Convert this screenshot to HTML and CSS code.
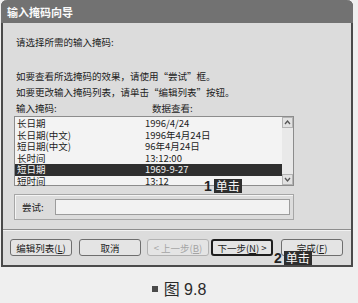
FILE: index.html
```html
<!DOCTYPE html>
<html>
<head>
    <meta charset="UTF-8">
    <title>输入掩码向导</title>
    <link rel="stylesheet" href="styles.css">
</head>
<body>
    <div class="page">
        <div class="dialog">
            <div class="title-bar">输入掩码向导</div>
            <div class="dialog-body">
                <div class="prompt">请选择所需的输入掩码:</div>
                <div class="hint hint-first">如要查看所选掩码的效果，请使用“尝试”框。</div>
                <div class="hint">如要更改输入掩码列表，请单击“编辑列表”按钮。</div>
                <div class="list-header">
                    <span class="header-mask">输入掩码:</span>
                    <span class="header-data">数据查看:</span>
                </div>
                <div class="mask-list">
                    <div class="mask-rows">
                        <div class="mask-row"><span class="col-mask">长日期</span><span class="col-data">1996/4/24</span></div>
                        <div class="mask-row"><span class="col-mask">长日期(中文)</span><span class="col-data">1996年4月24日</span></div>
                        <div class="mask-row"><span class="col-mask">短日期(中文)</span><span class="col-data">96年4月24日</span></div>
                        <div class="mask-row"><span class="col-mask">长时间</span><span class="col-data">13:12:00</span></div>
                        <div class="mask-row selected"><span class="col-mask">短日期</span><span class="col-data">1969-9-27</span></div>
                        <div class="mask-row"><span class="col-mask">短时间</span><span class="col-data">13:12</span></div>
                    </div>
                    <div class="scrollbar">
                        <div class="scroll-button">
                            <svg width="9" height="9" viewBox="0 0 9 9"><polyline points="2,6 4.5,3 7,6" fill="none" stroke="#555" stroke-width="1.3"/></svg>
                        </div>
                        <div class="scroll-track"></div>
                        <div class="scroll-button">
                            <svg width="9" height="9" viewBox="0 0 9 9"><polyline points="2,3 4.5,6 7,3" fill="none" stroke="#555" stroke-width="1.3"/></svg>
                        </div>
                    </div>
                    <div class="callout callout-list"><span class="callout-num">1</span><span class="callout-text">单击</span></div>
                </div>
                <div class="try-group">
                    <span class="try-label">尝试:</span>
                    <div class="try-input"></div>
                </div>
            </div>
            <div class="separator"></div>
            <div class="button-row">
                <button class="button">编辑列表(<u>L</u>)</button>
                <button class="button">取消</button>
                <button class="button back-button">&lt; 上一步(<u>B</u>)</button>
                <button class="button next-button">下一步(<u>N</u>) &gt;</button>
                <button class="button finish-button">完成(<u>F</u>)</button>
                <div class="callout callout-next"><span class="callout-num">2</span><span class="callout-text">单击</span></div>
            </div>
        </div>
        <div class="caption"><span class="caption-mark"></span>图 9.8</div>
    </div>
</body>
</html>
```

FILE: styles.css
```css
body {
    margin: 0;
    background-color: #efefef;
    font-family: "Noto Sans CJK SC", "Liberation Sans", sans-serif;
    color: #1c1c1c;
}

.page {
    width: 358px;
    height: 303px;
    overflow: hidden;
}

.dialog {
    margin-left: 1px;
    width: 352px;
    height: 267px;
    box-sizing: border-box;
    background-color: #dcdcdc;
    border: 2px solid #4a4a4a;
    border-top: none;
    border-radius: 6px 6px 0 0;
    display: flex;
    flex-direction: column;
}

.title-bar {
    height: 23px;
    margin: 0 -2px;
    padding-left: 6px;
    background-color: #727272;
    border-radius: 6px 6px 0 0;
    color: #fafafa;
    font-size: 11px;
    font-weight: bold;
    line-height: 24px;
}

.dialog-body {
    padding: 12px 0 0 11px;
    display: flex;
    flex-direction: column;
    font-size: 9.5px;
    line-height: 14px;
}

.prompt,
.hint {
    padding-left: 2px;
}

.hint {
    margin-top: 2px;
}

.hint-first {
    margin-top: 20px;
}

.list-header {
    margin-top: 2px;
    padding-left: 2px;
    display: flex;
}

.header-mask {
    width: 136px;
}

.mask-list {
    position: relative;
    margin-top: 1px;
    width: 280px;
    height: 70px;
    box-sizing: border-box;
    border: 1px solid #8c8c8c;
    background-color: #f3f3f3;
    display: flex;
}

.mask-rows {
    flex: 1;
    padding-top: 1px;
    font-size: 9.5px;
}

.mask-row {
    height: 11.5px;
    line-height: 11.5px;
    display: flex;
    white-space: nowrap;
}

.mask-row.selected {
    background-color: #2f2f2f;
    color: #f4f4f4;
}

.col-mask {
    width: 128px;
    padding-left: 2px;
}

.scrollbar {
    width: 11px;
    display: flex;
    flex-direction: column;
    background-color: #e9e9e9;
}

.scroll-button {
    height: 11px;
    box-sizing: border-box;
    border: 1px solid #b4b4b4;
    background-color: #e2e2e2;
    display: flex;
    align-items: center;
    justify-content: center;
}

.scroll-track {
    flex: 1;
}

.try-group {
    margin-top: 8px;
    width: 280px;
    height: 26px;
    box-sizing: border-box;
    border: 1px solid #a6a6a6;
    box-shadow: inset 1px 1px 0 #f4f4f4;
    padding: 0 3px 0 7px;
    display: flex;
    align-items: center;
}

.try-label {
    width: 33px;
}

.try-input {
    flex: 1;
    height: 16px;
    box-sizing: border-box;
    border: 1px solid #9c9c9c;
    background-color: #f2f2f2;
}

.separator {
    margin-top: 9px;
    height: 1px;
    background-color: #8e8e8e;
    border-bottom: 1px solid #f2f2f2;
}

.button-row {
    position: relative;
    margin-top: 8px;
    padding-left: 7px;
    display: flex;
    gap: 7px;
}

.button {
    width: 62px;
    height: 17px;
    padding: 0;
    box-sizing: border-box;
    border: 1px solid #6e6e6e;
    border-radius: 3px;
    background-color: #e4e4e4;
    color: #1c1c1c;
    font-family: "Noto Sans CJK SC", "Liberation Sans", sans-serif;
    font-size: 9.5px;
    line-height: 14px;
}

.back-button {
    margin-left: -1px;
    border-color: #b2b2b2;
    color: #a4a4a4;
}

.next-button {
    margin-left: -5px;
    border: 2px solid #1e1e1e;
}

.finish-button {
    margin-left: 1px;
}

.callout {
    position: absolute;
    display: flex;
    align-items: center;
    gap: 2px;
}

.callout-list {
    left: 189px;
    top: 62px;
}

.callout-next {
    left: 271px;
    top: 12px;
}

.callout-num {
    font-family: "Liberation Sans", sans-serif;
    font-size: 14px;
    font-weight: bold;
    line-height: 14px;
    color: #222;
}

.callout-text {
    padding: 0 2px;
    height: 14px;
    background-color: #2e2e2e;
    color: #f6f6f6;
    font-size: 12px;
    line-height: 14px;
}

.caption {
    margin-top: 14px;
    text-align: center;
    font-family: "Liberation Sans", "Noto Sans CJK SC", sans-serif;
    font-size: 16px;
    line-height: 18px;
    color: #2a2a2a;
}

.caption-mark {
    display: inline-block;
    width: 6px;
    height: 6px;
    margin-right: 6px;
    vertical-align: 3px;
    background-color: #4a4a4a;
}
```
